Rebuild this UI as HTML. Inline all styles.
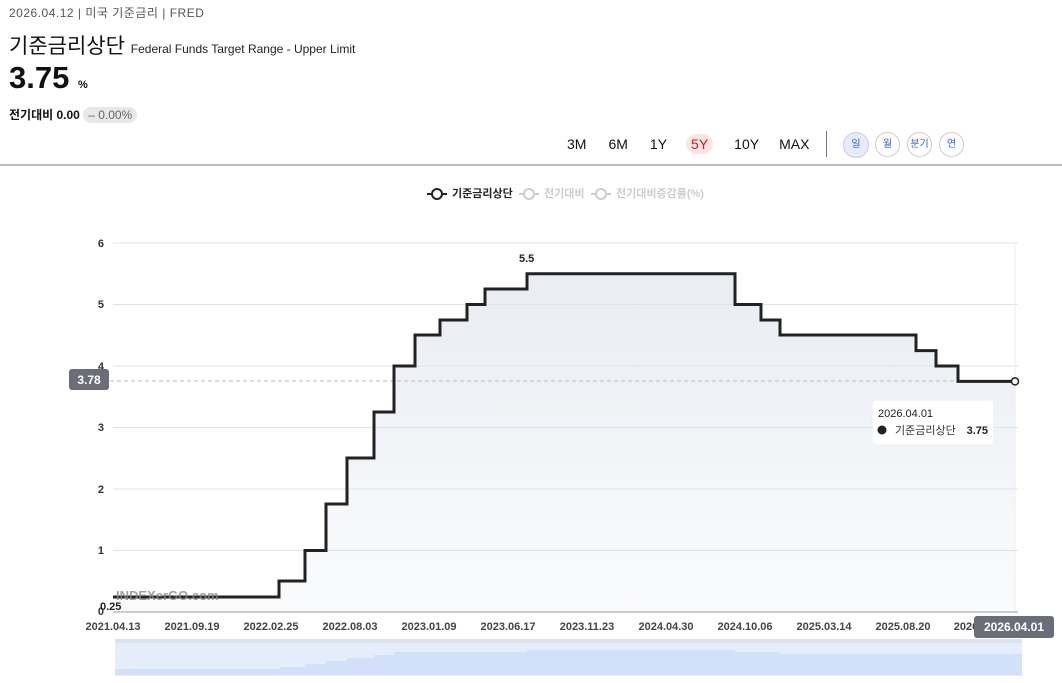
<!DOCTYPE html><html><head><meta charset="utf-8"><style>
body{margin:0;width:1062px;height:683px;background:#fff;font-family:"Liberation Sans","Noto Sans CJK KR",sans-serif;position:relative;overflow:hidden;color:#111}
.a{position:absolute;white-space:nowrap}
</style></head><body>
<div class="a" style="left:9px;top:4px;font-size:12px;color:#555;letter-spacing:.5px">2026.04.12 | 미국 기준금리 | FRED</div>
<div class="a" style="left:9px;top:30px;font-size:21px;color:#111">기준금리상단 <span style="font-size:12px;color:#222">Federal Funds Target Range - Upper Limit</span></div>
<div class="a" style="left:9px;top:60px;font-size:31px;font-weight:bold">3.75 <span style="font-size:11px">%</span></div>
<div class="a" style="left:9px;top:106px;font-size:12px;font-weight:bold">전기대비 0.00 <span style="font-weight:normal;color:#666;background:#e8e8ea;border-radius:9px;padding:1px 5px">– 0.00%</span></div>
<div class="a" style="left:567px;top:136px;font-size:14px;color:#111">
<span style="margin-right:22px">3M</span><span style="margin-right:22px">6M</span><span style="margin-right:24px">1Y</span><span style="margin-right:21px;color:#b22;background:#fbe4e4;border-radius:10px;padding:2px 5px;margin-left:-5px">5Y</span><span style="margin-right:20px">10Y</span><span>MAX</span></div>
<div class="a" style="left:826px;top:131px;width:1px;height:26px;background:#777"></div>
<div class="a" style="left:843px;top:132px;width:24px;height:24px;border:1px solid #ccd;border-radius:50%;background:#e4ecfa;font-size:10px;color:#36c;text-align:center;line-height:23px">일</div>
<div class="a" style="left:875px;top:132px;width:23px;height:23px;border:1px solid #ccc;border-radius:50%;font-size:10px;color:#36c;text-align:center;line-height:23px">월</div>
<div class="a" style="left:907px;top:132px;width:23px;height:23px;border:1px solid #ccc;border-radius:50%;font-size:10px;color:#36c;text-align:center;line-height:23px">분기</div>
<div class="a" style="left:939px;top:132px;width:23px;height:23px;border:1px solid #ccc;border-radius:50%;font-size:10px;color:#36c;text-align:center;line-height:23px">연</div>
<div class="a" style="left:0;top:164px;width:1062px;height:2px;background:#bbb"></div>
<svg class="a" style="left:0;top:0" width="1062" height="683">
<defs><linearGradient id="g" x1="0" y1="0" x2="0" y2="1"><stop offset="0" stop-color="#e9edf3"/><stop offset="1" stop-color="#fafbfc"/></linearGradient></defs>
<g font-size="11" font-weight="bold" fill="#222"><line x1="427" y1="194" x2="447" y2="194" stroke="#222" stroke-width="2"/><circle cx="437" cy="194" r="5" fill="#fff" stroke="#222" stroke-width="2"/><text x="452" y="197">기준금리상단</text>
<g fill="#ccc" stroke="#ccc"><line x1="519" y1="194" x2="539" y2="194" stroke-width="2"/><circle cx="529" cy="194" r="5" fill="#fff" stroke-width="2"/><text x="544" y="197" stroke="none">전기대비</text><line x1="591" y1="194" x2="611" y2="194" stroke-width="2"/><circle cx="601" cy="194" r="5" fill="#fff" stroke-width="2"/><text x="616" y="197" stroke="none">전기대비증감률(%)</text></g></g>
<path d="M113 597H279V581H305V550.5H326V504H347V458H374V412H394V366H415V335H440V320H467V304.5H485V289H527V273.8H735V304.5H761V320H780V335H916V350.6H936V366H958V381.4H1015V612H113Z" fill="url(#g)"/>
<g stroke="#dde3ee" stroke-width="1"><line x1="113" y1="243" x2="1018" y2="243"/><line x1="113" y1="304.5" x2="1018" y2="304.5"/><line x1="113" y1="366" x2="1018" y2="366"/><line x1="113" y1="427.5" x2="1018" y2="427.5"/><line x1="113" y1="489" x2="1018" y2="489"/><line x1="113" y1="550.5" x2="1018" y2="550.5"/></g>
<line x1="1015" y1="243" x2="1015" y2="612" stroke="#eee"/>
<line x1="113" y1="612" x2="1018" y2="612" stroke="#999"/>
<line x1="110" y1="381" x2="1015" y2="381" stroke="#bbb" stroke-dasharray="4 3"/>
<g font-size="11" font-weight="bold" fill="#333" text-anchor="end"><text x="104" y="247">6</text><text x="104" y="308">5</text><text x="104" y="370">4</text><text x="104" y="431">3</text><text x="104" y="493">2</text><text x="104" y="554">1</text><text x="104" y="615">0</text></g>
<path d="M113 597H279V581H305V550.5H326V504H347V458H374V412H394V366H415V335H440V320H467V304.5H485V289H527V273.8H735V304.5H761V320H780V335H916V350.6H936V366H958V381.4H1015" fill="none" stroke="#222" stroke-width="3"/>
<circle cx="1015" cy="381.4" r="3.5" fill="#fff" stroke="#222" stroke-width="1.5"/>
<text x="116" y="600" font-size="13" font-weight="bold" fill="#888" opacity=".8">INDEXerGO.com</text>
<text x="100" y="610" font-size="11" font-weight="bold" fill="#222">0.25</text>
<text x="519" y="262" font-size="11" font-weight="bold" fill="#222">5.5</text>
<rect x="69" y="369" width="40" height="21" rx="3" fill="#6b6e78"/><text x="89" y="384" font-size="12" font-weight="bold" fill="#fff" text-anchor="middle">3.78</text>
<g font-size="11" font-weight="bold" fill="#444" text-anchor="middle"><text x="113" y="630">2021.04.13</text><text x="192" y="630">2021.09.19</text><text x="271" y="630">2022.02.25</text><text x="350" y="630">2022.08.03</text><text x="429" y="630">2023.01.09</text><text x="508" y="630">2023.06.17</text><text x="587" y="630">2023.11.23</text><text x="666" y="630">2024.04.30</text><text x="745" y="630">2024.10.06</text><text x="824" y="630">2025.03.14</text><text x="903" y="630">2025.08.20</text><text x="966" y="630">2026</text></g>
<rect x="974" y="616" width="80" height="22" rx="3" fill="#6b6e78"/><text x="1014" y="631" font-size="12" font-weight="bold" fill="#fff" text-anchor="middle">2026.04.01</text>
<rect x="872" y="400" width="122" height="45" rx="4" fill="#fff" stroke="#eee"/>
<text x="878" y="417" font-size="11" fill="#222">2026.04.01</text><circle cx="882" cy="430" r="4.5" fill="#222"/><text x="895" y="434" font-size="11" fill="#333">기준금리상단</text><text x="988" y="434" font-size="11" font-weight="bold" fill="#222" text-anchor="end">3.75</text>
<rect x="115" y="639" width="907" height="37" fill="#e5ecfb"/><rect x="115" y="639" width="907" height="4" fill="#dde3ee"/>
<path d="M115 669H280V667H305V664H326V661H347V658H374V655H394V652H527V650H735V652H780V654H1022V675H115Z" fill="#d3e0fa"/>
</svg>
</body></html>
